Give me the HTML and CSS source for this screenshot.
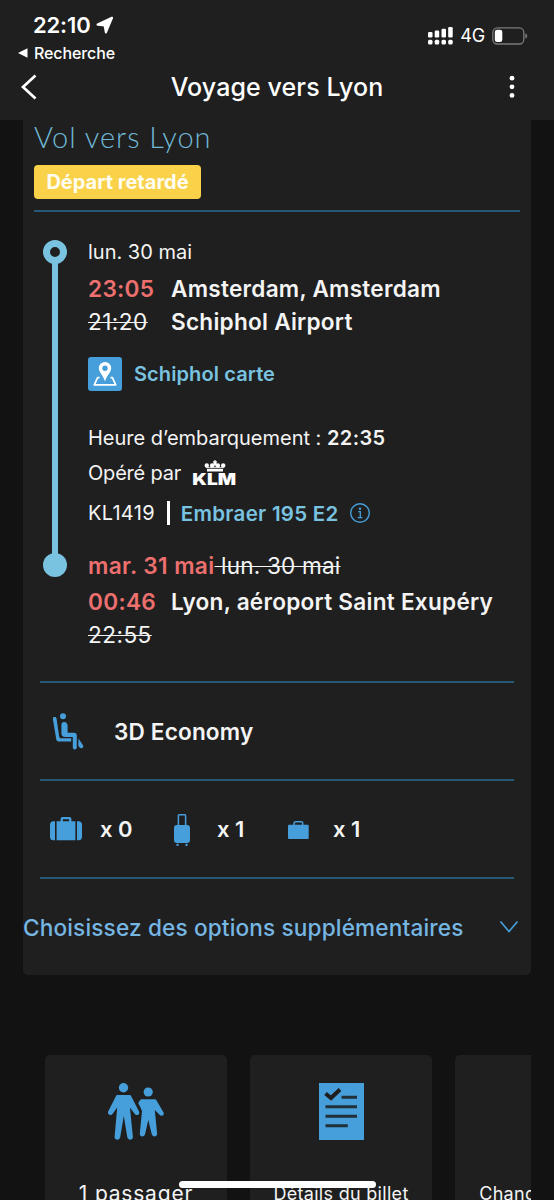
FILE: index.html
```
<!DOCTYPE html>
<html lang="fr">
<head>
<meta charset="utf-8">
<title>Voyage vers Lyon</title>
<link rel="stylesheet" href="styles.css">
</head>
<body>
<div class="phone">
  <header class="header">
    <div class="status">
      <div class="status-left">
        <div class="clock"><span class="t clock-text">22:10</span>
          <svg width="18" height="18" viewBox="0 0 18 18"><path d="M16 1.800 1.600 8.600 8.600 9.300 9.900 16.400z" fill="#fff" stroke="#fff" stroke-width="2.200" stroke-linejoin="round"/></svg>
        </div>
        <div class="back-app"><svg width="10" height="10" viewBox="0 0 10 10"><path d="M0 5 9.500.3v9.400z" fill="#fff"/></svg><span class="t back-text">Recherche</span></div>
      </div>
      <div class="status-right">
        <svg width="25" height="18" viewBox="0 0 25 18" fill="#fff"><rect x="0" y="5" width="4.500" height="5.500" rx="1.300"/><rect x="6.700" y="3.600" width="4.500" height="6.900" rx="1.300"/><rect x="13.500" y="1.800" width="4.500" height="8.700" rx="1.300"/><rect x="20.200" y="0" width="4.500" height="10.500" rx="1.300"/><rect x="0" y="12.700" width="4.500" height="4.800" rx="1.500"/><rect x="6.700" y="12.700" width="4.500" height="4.800" rx="1.500"/><rect x="13.500" y="12.700" width="4.500" height="4.800" rx="1.500"/><rect x="20.200" y="12.700" width="4.500" height="4.800" rx="1.500"/></svg>
        <span class="t net">4G</span>
        <svg width="36" height="18" viewBox="0 0 36 18"><rect x=".8" y=".8" width="31" height="16.200" rx="4.500" fill="none" stroke="#7b7b7b" stroke-width="1.300"/><path d="M33.300 6.300v5.300c1.200-.4 1.900-1.400 1.900-2.600s-.7-2.300-1.900-2.700z" fill="#7b7b7b"/><rect x="2.800" y="2.800" width="7.500" height="12.200" rx="2.300" fill="#fff"/></svg>
      </div>
    </div>
    <div class="nav">
      <svg width="18" height="28" viewBox="0 0 18 28"><path d="M15.500 2.500 3 14l12.500 11.500" fill="none" stroke="#fff" stroke-width="2.700"/></svg>
      <h1 class="nav-title"><span class="t nav-text">Voyage vers Lyon</span></h1>
      <svg width="6" height="24" viewBox="0 0 6 24" fill="#fff"><circle cx="3" cy="3.200" r="2.400"/><circle cx="3" cy="11.800" r="2.400"/><circle cx="3" cy="20.400" r="2.400"/></svg>
    </div>
  </header>

  <main class="content">
    <section class="card">
      <div class="card-head">
        <h2 class="title"><span class="t title-text">Vol vers Lyon</span></h2>
        <div class="badge"><span class="t badge-text">Départ retardé</span></div>
      </div>
      <div class="trip">
        <div class="rail"><div class="ring"></div><div class="track"></div><div class="dot"></div></div>
        <div class="stops">
          <div class="row date"><span class="t">lun. 30 mai</span></div>
          <div class="stop">
            <div class="times"><span><b class="t late">23:05</b></span><span><s class="t old">21:20</s></span></div>
            <div class="place"><span><b class="t">Amsterdam, Amsterdam</b></span><span><b class="t">Schiphol Airport</b></span></div>
          </div>
          <div class="row map">
            <svg width="34" height="34" viewBox="0 0 34 34"><rect width="34" height="34" rx="3" fill="#469fdb"/><path d="M11.500 20.700H9.600l-3.300 7.200h21.400l-3.300-7.200h-1.900" fill="none" stroke="#fff" stroke-width="1.700" stroke-linejoin="round"/><path fill-rule="evenodd" d="M17 4.900a6.200 6.200 0 0 0-6.200 6.200c0 4.300 4.300 7.300 6.200 13.300 1.900-6 6.200-9 6.200-13.300A6.200 6.200 0 0 0 17 4.900zm0 3.600a2.700 2.700 0 1 1 0 5.400 2.700 2.700 0 0 1 0-5.400z" fill="#fff"/></svg>
            <span class="t map-text">Schiphol carte</span>
          </div>
          <div class="row boarding"><span class="t">Heure d’embarquement : <b>22:35</b></span></div>
          <div class="row operator"><span class="t op-text">Opéré par</span>
            <span class="klm"><svg width="22" height="12" viewBox="0 0 22 12" fill="#fff"><circle cx="2.800" cy="5.500" r="2.200"/><circle cx="8.100" cy="5.500" r="2.200"/><circle cx="13.900" cy="5.500" r="2.200"/><circle cx="19.200" cy="5.500" r="2.200"/><circle cx="11" cy="3.400" r="1.600"/><path d="M10.400 0h1.200v1.200H13v1.200h-1.400v4h-1.200v-4H9V1.200h1.400zM2.500 7.200h17v1h-17zM3 9h16v2.600H3z"/></svg><span class="t klm-text">KLM</span></span>
          </div>
          <div class="row flight"><span class="t fl-text">KL1419</span><i class="bar"></i><b class="t plane-text">Embraer 195 E2</b>
            <svg width="22" height="22" viewBox="0 0 22 22"><circle cx="11" cy="11" r="9.300" fill="none" stroke="#469fdb" stroke-width="1.400"/><circle cx="11" cy="6.700" r="1.200" fill="#469fdb"/><path d="M9.300 9.700h2v5.800M8.800 15.700h4.600" fill="none" stroke="#469fdb" stroke-width="1.300"/></svg>
          </div>
          <div class="row newdate"><b class="t late">mar. 31 mai</b><s class="t old-date">&nbsp;lun. 30 mai</s></div>
          <div class="stop">
            <div class="times"><span><b class="t late">00:46</b></span><span><s class="t old">22:55</s></span></div>
            <div class="place"><span><b class="t">Lyon, aéroport Saint Exupéry</b></span></div>
          </div>
        </div>
      </div>
      <div class="line seat">
        <svg width="32" height="38" viewBox="0 0 32 38" fill="#469fdb"><circle cx="11" cy="4.200" r="3"/><path d="M1.200 5.200c1.500-.6 3-.2 3.300 1L7.200 24.700l1 1.500h11v3.400H6.600c-1.300 0-2-.7-2.300-2L.9 7.300z"/><path d="M12 9.900c2.300 0 3.600 1.600 3.600 3.900v7H22c2 0 2.800 1.200 2.800 2.800v12c0 2.600-4 2.600-4 0V25H13c-2.300 0-3.600-1.200-3.600-3.500v-8.800c0-1.600 1-2.800 2.600-2.800z"/><path d="M26.500 26.500 31 33.300c1.200 2.400-1.700 3.700-3.400 2.300-1.200-1-1.300-2.300-1.300-4z"/></svg>
        <b class="t seat-text">3D Economy</b>
      </div>
      <div class="line bags">
        <div class="bag checked"><svg width="32" height="24" viewBox="0 0 32 24" fill="#469fdb"><path d="M5 4.300v19H3.300C1.300 23.300 0 22 0 20V7.600c0-2 1.300-3.300 3.300-3.300zM27 4.300v19h1.700c2 0 3.300-1.300 3.300-3.300V7.600c0-2-1.300-3.300-3.300-3.300z"/><path fill-rule="evenodd" d="M6.600 4.300h4V2c0-1.100.8-2 2-2h6.800c1.200 0 2 .9 2 2v2.300h4v19H6.600zm6.300 0h6.200V2.200h-6.200z"/></svg><b class="t">x 0</b></div>
        <div class="bag cabin"><svg width="16" height="32" viewBox="0 0 16 32" fill="#469fdb"><path d="M4.400 11V1.600c0-.5.300-.8.8-.8h5.600c.5 0 .8.300.8.800V11" fill="none" stroke="#469fdb" stroke-width="1.500"/><rect y="11" width="16" height="18" rx="3"/><path d="M2.500 29.700h2V32h-2zM11.500 29.700h2V32h-2z"/></svg><b class="t">x 1</b></div>
        <div class="bag personal"><svg width="21" height="18" viewBox="0 0 21 18" fill="#469fdb"><path fill-rule="evenodd" d="M1.300 3.800h4.100V2c0-1.200.8-2 2-2h6c1.200 0 2 .8 2 2v1.800h4c.9 0 1.300.5 1.300 1.300v11.600c0 .8-.4 1.300-1.300 1.300h-18C.5 18 0 17.500 0 16.700V5.100c0-.8.5-1.300 1.300-1.300zm5.600 0h7V1.500h-7z"/></svg><b class="t">x 1</b></div>
      </div>
      <div class="line options"><span class="t opt-text">Choisissez des options supplémentaires</span>
        <svg width="20" height="14" viewBox="0 0 20 14"><path d="M1.500 1.500 10 11.500l8.500-10" fill="none" stroke="#469fdb" stroke-width="1.700"/></svg>
      </div>
    </section>

    <nav class="tiles">
      <div class="tile">
        <svg width="56" height="57" viewBox="0 0 56 57" fill="#469fdb"><circle cx="15.500" cy="4.700" r="4.700"/><path d="M9.300 12h12.500c.6 0 1 .3 1.300.9L31 28.400c1.500 3-2.700 5.200-4.400 2.300l-4.700-6.300 3 29.300c.2 3.600-4.900 4-5.600.6L15.800 33l-3.600 21.300c-.7 3.400-5.900 3-5.600-.6l2.600-29.300-4.500 6.300c-1.800 2.900-5.800.7-4.500-2.300L8 12.900c.3-.6.700-.9 1.300-.9z"/><circle cx="40.200" cy="9" r="4.600"/><path d="M33 16.300h14c.6 0 1 .3 1.300.8l7.200 12.500c1.400 2.800-2 4.500-4 2.200l-4.700-4.800 2.300 23.500c.2 3.600-4.700 3.900-5.400.6L40.300 37l-3.200 14.100c-.7 3.300-5.500 3-5.300-.6L34 28l-2.300-5.300c-1.700-2-1.600-2.300-.8-4z"/></svg>
        <span class="t passengers">1 passager</span>
      </div>
      <div class="tile">
        <svg width="45" height="57" viewBox="0 0 45 57"><path d="M0 0h45v57H0z" fill="#469fdb"/><path d="m6.500 10.500 5.500 4.500 9-8.500" fill="none" stroke="#1f1f1f" stroke-width="4"/><path d="M22.500 14.300H38M6.500 23.800H38M6.500 33.300H38M6.500 42.700h22.300" stroke="#20313a" stroke-width="3"/></svg>
        <span class="t">Détails du billet</span>
      </div>
      <div class="tile"><svg width="45" height="57"></svg><span class="t">Changer de vol</span></div>
    </nav>
  </main>
  <div class="home"></div>
</div>
</body>
</html>
```
FILE: styles.css
```
* { box-sizing: border-box; }
body {
  margin: 0;
  background: #121212;
  color: #f4f4f4;
  font-family: Inter, "Liberation Sans", sans-serif;
  font-size: 20px;
}
h1, h2 { margin: 0; font-weight: inherit; font-size: inherit; }
b { font-weight: 600; }
svg { display: block; flex: none; }
.t { white-space: nowrap; flex: none; }
s { text-decoration-thickness: 1px; }

.phone { position: relative; width: 554px; height: 1200px; overflow: hidden; }

.header { height: 120px; background: #1f1f1f; color: #fff; }
.status { display: flex; justify-content: space-between; height: 66px; padding: 12px 26px 0 18px; }
.clock { display: flex; align-items: center; gap: 5px; height: 26px; padding-left: 15px; }
.clock-text { font-size: 22px; font-weight: 600; letter-spacing: -.15px; }
.back-app { display: flex; align-items: center; gap: 6px; height: 30px; }
.back-text { font-size: 16px; font-weight: 500; letter-spacing: -.1px; }
.status-right { display: flex; align-items: center; gap: 7px; height: 47px; padding-right: 0; }
.net { font-size: 18px; letter-spacing: -.2px; }
.nav { display: flex; align-items: center; justify-content: space-between; height: 42px; padding: 0 39px 0 20px; }
.nav-text { margin-left: 7px; font-size: 25px; font-weight: 500; letter-spacing: .1px; }

.content { padding: 0 23px; }
.card { height: 855px; background: #1f1f1f; border-radius: 0 0 5px 5px; }
.card-head { height: 92px; margin: 0 11px; border-bottom: 2px solid #265878; }
.title { display: flex; align-items: center; height: 32px; }
.title-text { font-family: Lato, sans-serif; font-weight: 300; font-size: 29px; letter-spacing: 1px; color: #70b8d5; }
.badge { display: flex; align-items: center; justify-content: center; width: 167px; height: 34px; margin-top: 13px; border-radius: 4px; background: #f9d24a; color: #fffdf2; }
.badge-text { font-weight: 700; font-size: 20px; }

.trip { display: flex; gap: 21px; height: 469px; padding: 24px 0 0 20px; }
.rail { display: flex; flex-direction: column; align-items: center; width: 24px; height: 341px; padding-top: 4px; }
.ring, .dot { width: 24px; height: 24px; border-radius: 50%; background: #79c3e0; }
.ring { border: 7px solid #79c3e0; background: #1f1f1f; }
.track { flex: 1; width: 6px; margin: -1px 0; background: #79c3e0; }
.row { display: flex; align-items: center; height: 32px; }
.stop { display: flex; margin-top: 4px; height: 66px; font-size: 22.6px; line-height: 33px; }
.times { width: 83px; letter-spacing: .3px; }
.times > span, .place > span { display: block; height: 33px; }
.old { letter-spacing: .45px; }
.place { letter-spacing: .25px; }
.late { color: #ed706f; }
.map { height: 34px; margin-top: 19px; gap: 12px; }
.map-text { font-weight: 600; color: #79c3e0; letter-spacing: .1px; }
.boarding { margin-top: 31px; letter-spacing: -.02px; }
.boarding b { letter-spacing: .4px; }
.operator { margin-top: 3px; gap: 12px; }
.op-text { letter-spacing: -.2px; }
.klm { display: flex; flex-direction: column; align-items: center; width: 43px; height: 26px; }
.klm-text { font-size: 16px; font-weight: 900; line-height: 14px; color: #fff; transform: scaleX(1.2); }
.flight { margin-top: 8px; }
.fl-text { letter-spacing: .3px; }
.bar { width: 3px; height: 24px; margin: 0 11px 0 12px; background: #fff; }
.plane-text { color: #79c3e0; margin-right: 10px; font-size: 20.5px; letter-spacing: .28px; }
.newdate { margin-top: 20px; font-size: 22.6px; letter-spacing: .4px; }
.old-date { letter-spacing: .17px; }

.line { display: flex; align-items: center; height: 98px; margin: 0 17px; border-top: 2px solid #265878; }
.seat { padding-left: 12px; gap: 30px; }
.seat-text, .bags { font-size: 22px; }
.seat-text { font-size: 22.6px; letter-spacing: .15px; }
.bags { padding-left: 10px; }
.bag { display: flex; align-items: center; }
.checked { width: 124px; gap: 18px; }
.cabin { width: 114px; gap: 27px; }
.personal { gap: 24px; }
.personal svg, .cabin svg { margin-top: 1px; }
.opt-text { margin-left: -17px; font-size: 22.6px; font-weight: 500; letter-spacing: .15px; color: #76b6e3; }
.options svg { margin-left: auto; margin-right: -5px; }

.tiles { display: flex; gap: 23px; margin-top: 80px; padding-left: 22px; overflow: hidden; }
.tile { display: flex; flex: none; flex-direction: column; align-items: center; width: 182px; height: 180px; padding-top: 28px; gap: 42px; background: #1f1f1f; border-radius: 5px; font-size: 18px; line-height: 24px; letter-spacing: .3px; }
.passengers { font-size: 21px; letter-spacing: .8px; }
.home { position: absolute; left: 179px; top: 1181px; width: 197px; height: 7px; border-radius: 4px; background: #fff; }
```
